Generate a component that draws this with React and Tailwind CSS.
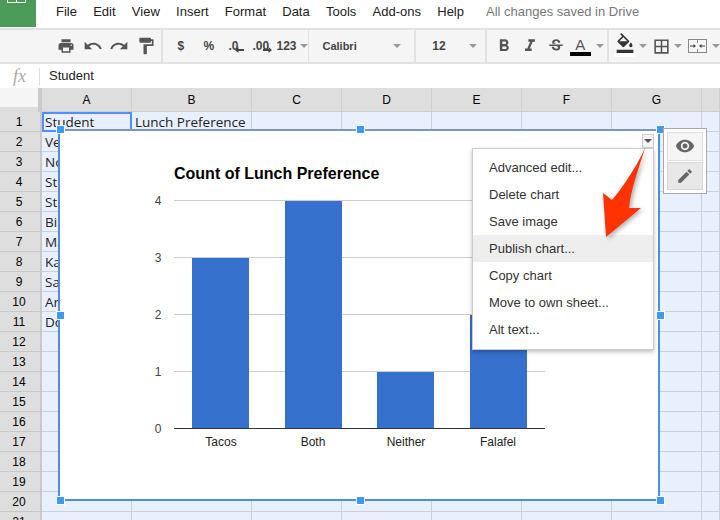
import React from 'react';
import {
  MdPrint,
  MdUndo,
  MdRedo,
  MdFormatPaint,
  MdFormatBold,
  MdFormatItalic,
  MdStrikethroughS,
  MdFormatColorFill,
  MdBorderAll,
  MdVisibility,
  MdEdit,
} from 'react-icons/md';

const menus = ['File', 'Edit', 'View', 'Insert', 'Format', 'Data', 'Tools', 'Add-ons', 'Help'];
const columns = ['A', 'B', 'C', 'D', 'E', 'F', 'G', ''];
const students = ['Student', 'Ve', 'No', 'St', 'St', 'Bi', 'Ma', 'Ka', 'Sa', 'An', 'Do'];
const chartMenu = ['Advanced edit...', 'Delete chart', 'Save image', 'Publish chart...', 'Copy chart', 'Move to own sheet...', 'Alt text...'];
const bars = [
  { label: 'Tacos', x: 192, cx: 221, v: 3 },
  { label: 'Both', x: 285, cx: 313, v: 4 },
  { label: 'Neither', x: 377, cx: 406, v: 1 },
  { label: 'Falafel', x: 470, cx: 498, v: 2 },
];

const Caret = () => <span className="w-0 h-0 border-x-[4px] border-x-transparent border-t-[4px] border-t-[#999]" />;
const Sep = () => <div className="w-[2px] h-full bg-[#e2e2e2]" />;

const Toolbar = () => (
  <div className="h-[36px] bg-[#f5f5f5] border-y-2 border-[#e2e2e2] flex items-center text-[#444] font-bold text-[12px]">
    <div className="w-[162px] h-full flex items-center pl-[57px] text-[#555]">
      <span className="w-[26px]">
        <MdPrint size={18} />
      </span>
      <span className="w-[26px]">
        <MdUndo size={20} />
      </span>
      <span className="w-[27px]">
        <MdRedo size={20} />
      </span>
      <MdFormatPaint size={20} />
    </div>
    <Sep />
    <div className="w-[145px] h-full flex items-center pl-[15px]">
      <span className="w-[26px]">$</span>
      <span className="w-[25px]">%</span>
      <span className="w-[24px] relative">
        .0
        <svg className="absolute left-[6px] top-[10px]" width="9" height="6" viewBox="0 0 9 6" fill="#444">
          <path d="M0 3 3.5 0v2H9v2H3.5v2z" />
        </svg>
      </span>
      <span className="w-[24px] relative">
        .00
        <svg className="absolute left-[10px] top-[10px]" width="9" height="6" viewBox="0 0 9 6" fill="#444">
          <path d="M9 3 5.5 0v2H0v2h5.5v2z" />
        </svg>
      </span>
      <span className="mr-[3px]">123</span>
      <Caret />
    </div>
    <Sep />
    <div className="w-[106px] h-full flex items-center justify-between pl-[13px] pr-[13px]">
      <span className="text-[11px]">Calibri</span>
      <Caret />
    </div>
    <Sep />
    <div className="w-[69px] h-full flex items-center justify-between pl-[15px] pr-[8px]">
      <span className="ml-[1px]">12</span>
      <Caret />
    </div>
    <Sep />
    <div className="w-[122px] h-full flex items-center pl-[7px] text-[#555]">
      <MdFormatBold size={20} />
      <MdFormatItalic size={20} className="ml-[6px]" />
      <MdStrikethroughS size={18} className="ml-[7px]" />
      <div className="ml-[5px] w-[21px] flex flex-col items-center">
        <span className="text-[15px] font-normal leading-[15px]">A</span>
        <div className="w-[21px] h-[4px] bg-black" />
      </div>
      <span className="ml-[5px] flex">
        <Caret />
      </span>
    </div>
    <Sep />
    <div className="flex-1 h-full flex items-center pl-[5px] text-[#555]">
      <div className="w-[21px] flex flex-col items-center">
        <MdFormatColorFill size={20} className="-mt-[2px] text-[#333]" />
        <div className="w-[21px] h-[4px] bg-white" />
      </div>
      <span className="ml-[4px] mr-[5px] flex">
        <Caret />
      </span>
      <MdBorderAll size={19} />
      <span className="ml-[3px] mr-[6px] flex">
        <Caret />
      </span>
      <svg width="19" height="14" viewBox="0 0 19 14" fill="none" stroke="#888" strokeWidth="1" className="shrink-0">
        <rect x="0.5" y="0.5" width="18" height="13" />
        <path d="M9.5 0v4M9.5 10v4" />
        <path d="M2 7h5M12 7h5" stroke="#444" />
        <path d="M8 7 5.5 5v4zM11 7l2.5-2v4z" fill="#444" stroke="none" />
      </svg>
      <span className="ml-[5px] flex">
        <Caret />
      </span>
    </div>
  </div>
);

const Sheet = () => (
  <div className="grid grid-cols-[42px_90px_120px_90px_90px_90px_90px_90px_18px] grid-rows-[24px] auto-rows-[20px] text-[12px] text-black">
    <div className="bg-[#dedede] border-r-[4px] border-[#cbcbcb]">
      <div className="h-[19px] bg-[#f5f5f5]" />
    </div>
    {columns.map((col) => (
      <div key={col} className="bg-[#dedede] border-r border-b border-[#cfcfcf] flex items-center justify-center">
        {col}
      </div>
    ))}
    {Array.from({ length: 21 }, (_, r) => (
      <React.Fragment key={r}>
        <div className="bg-[#dedede] border-r-2 border-b border-[#c8c8c8] flex items-center justify-center pr-[2px]">{r + 1}</div>
        {columns.map((_, c) => (
          <div
            key={c}
            className={`bg-[#e9f0fd] border-r border-b border-[#cbd0dc] font-['Open_Sans',sans-serif] text-[13.5px] leading-[20px] pl-[3px] overflow-hidden whitespace-nowrap text-[#222] ${
              r === 0 && c === 0 ? 'outline-2 -outline-offset-2 outline-[#4d90fe]' : ''
            }`}
          >
            {c === 0 ? students[r] : r === 0 && c === 1 ? 'Lunch Preference' : ''}
          </div>
        ))}
      </React.Fragment>
    ))}
  </div>
);

const Handle = ({ className }) => (
  <div className={`absolute w-[7px] h-[7px] bg-[#3d9bf5] border border-white box-content -ml-[4px] -mt-[4px] ${className}`} />
);

const Chart = () => (
  <svg width="598" height="368" viewBox="60 131 598 368" className="block" fontFamily="Liberation Sans, sans-serif">
    <text x="174" y="179" fontSize="16" fontWeight="700" fill="#000">
      Count of Lunch Preference
    </text>
    {[0, 1, 2, 3, 4].map((v) => (
      <g key={v}>
        <rect x="174" y={428 - v * 57} width="371" height="1" fill={v === 0 ? '#333' : '#ccc'} />
        <text x="158" y={433 - v * 57} fontSize="12" fill="#444" textAnchor="middle">
          {v}
        </text>
      </g>
    ))}
    {bars.map((b) => (
      <g key={b.label}>
        <rect x={b.x} y={429 - b.v * 57} width="57" height={b.v * 57 - 1} fill="#3570cc" />
        <text x={b.cx} y="446" fontSize="12" fill="#222" textAnchor="middle">
          {b.label}
        </text>
      </g>
    ))}
  </svg>
);

const ChartMenu = () => (
  <div className="absolute left-[412px] top-[17px] w-[182px] h-[202px] bg-white border border-[#ccc] shadow-[0_2px_4px_rgba(0,0,0,0.25)] pt-[5px] text-[13px] text-[#333]">
    {chartMenu.map((item) => (
      <div key={item} className={`h-[27px] leading-[28px] pl-[16px] ${item === 'Publish chart...' ? 'bg-[#eeeeee]' : ''}`}>
        {item}
      </div>
    ))}
  </div>
);

const App = () => (
  <div className="w-[720px] h-[520px] overflow-hidden bg-white relative font-['Liberation_Sans',Arial,sans-serif]">
    <div className="h-[28px] flex text-[13px] text-[#222] leading-[24px]">
      <div className="w-[36px] h-[27px] bg-[#4b9a58] relative overflow-hidden">
        <div className="absolute left-[7px] -top-[6px] w-[19px] h-[9px] border border-white" />
        <div className="absolute left-[16px] -top-[6px] w-px h-[9px] bg-white" />
      </div>
      <div className="flex gap-[16.25px] pl-[20px]">
        {menus.map((m) => (
          <span key={m}>{m}</span>
        ))}
      </div>
      <span className="ml-[22px] text-[#777]">All changes saved in Drive</span>
    </div>
    <Toolbar />
    <div className="h-[24px] bg-white flex items-center">
      <span className="w-[39px] text-center font-['Liberation_Serif',serif] italic text-[18px] text-[#aaa] leading-none">fx</span>
      <div className="w-px h-[17px] bg-[#ddd]" />
      <span className="ml-[9px] text-[13px] text-[#222]">Student</span>
    </div>
    <div className="relative">
      <Sheet />
      <div className="absolute left-[58px] top-[41px] w-[602px] h-[372px] bg-white border-2 border-[#4d90d8] border-t-[#7f98b8]">
        <Chart />
        <ChartMenu />
        <div className="absolute left-[582px] top-[3px] w-[12px] h-[14px] bg-[#f3f3f3] border border-[#ccc] flex items-center justify-center">
          <span className="w-0 h-0 border-x-[4px] border-x-transparent border-t-[4px] border-t-[#555]" />
        </div>
        {/* red callout arrow from the screenshot */}
        <svg className="absolute left-[540px] top-[15px] drop-shadow-[2px_2px_2px_rgba(0,0,0,0.3)]" width="50" height="95" viewBox="600 146 50 95">
          <path d="M645 148 C639 168 631 188 629 208 L641 208 L606 237 L603 193 L612 200 C622 188 636 168 645 148 Z" fill="#ff3300" />
        </svg>
      </div>
      <Handle className="left-[60px] top-[41px]" />
      <Handle className="left-[360px] top-[41px]" />
      <Handle className="left-[660px] top-[41px]" />
      <Handle className="left-[60px] top-[227px]" />
      <Handle className="left-[660px] top-[227px]" />
      <Handle className="left-[60px] top-[412px]" />
      <Handle className="left-[360px] top-[412px]" />
      <Handle className="left-[660px] top-[412px]" />
      <div className="absolute left-[663px] top-[40px] w-[44px] h-[66px] bg-white border border-[#aaa] p-[3px] flex flex-col gap-[1px]">
        <div className="h-[29px] bg-[#f5f5f5] border border-[#e0e0e0] flex items-center justify-center text-[#666]">
          <MdVisibility size={20} />
        </div>
        <div className="h-[29px] bg-[#e8e8e8] border border-[#d8d8d8] flex items-center justify-center text-[#666]">
          <MdEdit size={18} />
        </div>
      </div>
    </div>
  </div>
);

export default App;
